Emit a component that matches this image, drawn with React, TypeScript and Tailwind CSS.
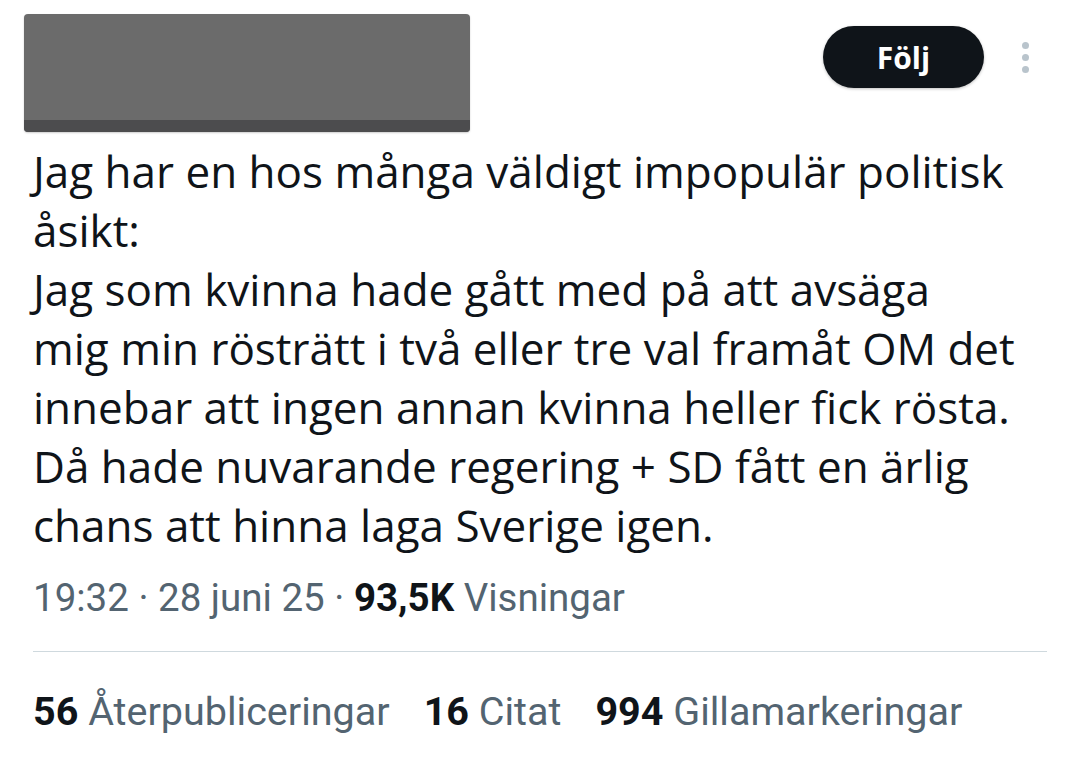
export default function App() {
  const body = [
    'Jag har en hos många väldigt impopulär politisk',
    'åsikt:',
    'Jag som kvinna hade gått med på att avsäga',
    'mig min rösträtt i två eller tre val framåt OM det',
    'innebar att ingen annan kvinna heller fick rösta.',
    'Då hade nuvarande regering + SD fått en ärlig',
    'chans att hinna laga Sverige igen.',
  ]

  return (
    <div className="w-[1080px] h-[766px] bg-white overflow-hidden">
      <div className="flex items-start pl-[24px] pr-[51px] pt-[14px]">
        {/* redacted header */}
        <div className="w-[446px] h-[118px] rounded-[4px] bg-[#6b6b6b] flex flex-col justify-end shadow-[0_1px_2px_rgba(0,0,0,0.2)]">
          <div className="h-[12px] bg-[#4c4c4e] rounded-b-[4px]" />
        </div>
        <div className="ml-auto mt-[12px] flex items-center">
          <button className="w-[161px] h-[62px] rounded-full bg-[#0f1419] text-white text-[30px] font-bold shadow-[0_1px_3px_rgba(0,0,0,0.25)] font-['Open_Sans',sans-serif]">
            Följ
          </button>
          <div className="ml-[38px] flex flex-col gap-[5px]">
            <span className="w-[7px] h-[7px] rounded-full bg-[#b9c4cc]" />
            <span className="w-[7px] h-[7px] rounded-full bg-[#b9c4cc]" />
            <span className="w-[7px] h-[7px] rounded-full bg-[#b9c4cc]" />
          </div>
        </div>
      </div>

      <div className="px-[33px] mt-[10px] font-['Open_Sans',sans-serif] text-[44px] leading-[59px] text-[#0f1419]">
        {body.map((l, i) => (
          <div key={i}>{l}</div>
        ))}
      </div>

      <div className="px-[33px] mt-[19px] font-['Roboto',sans-serif] text-[38.5px] leading-[48px] text-[#536471]">
        19:32 · 28 juni 25 · <span className="font-bold text-[#0f1419]">93,5K</span> Visningar
      </div>

      <div className="mx-[33px] mt-[29px] h-px bg-[#cfd9de]" />

      <div className="px-[33px] mt-[36px] flex gap-[34px] font-['Roboto',sans-serif] text-[39.5px] leading-[48px] text-[#536471]">
        <span><span className="font-bold text-[#0f1419]">56</span> Återpubliceringar</span>
        <span><span className="font-bold text-[#0f1419]">16</span> Citat</span>
        <span><span className="font-bold text-[#0f1419]">994</span> Gillamarkeringar</span>
      </div>
    </div>
  )
}
